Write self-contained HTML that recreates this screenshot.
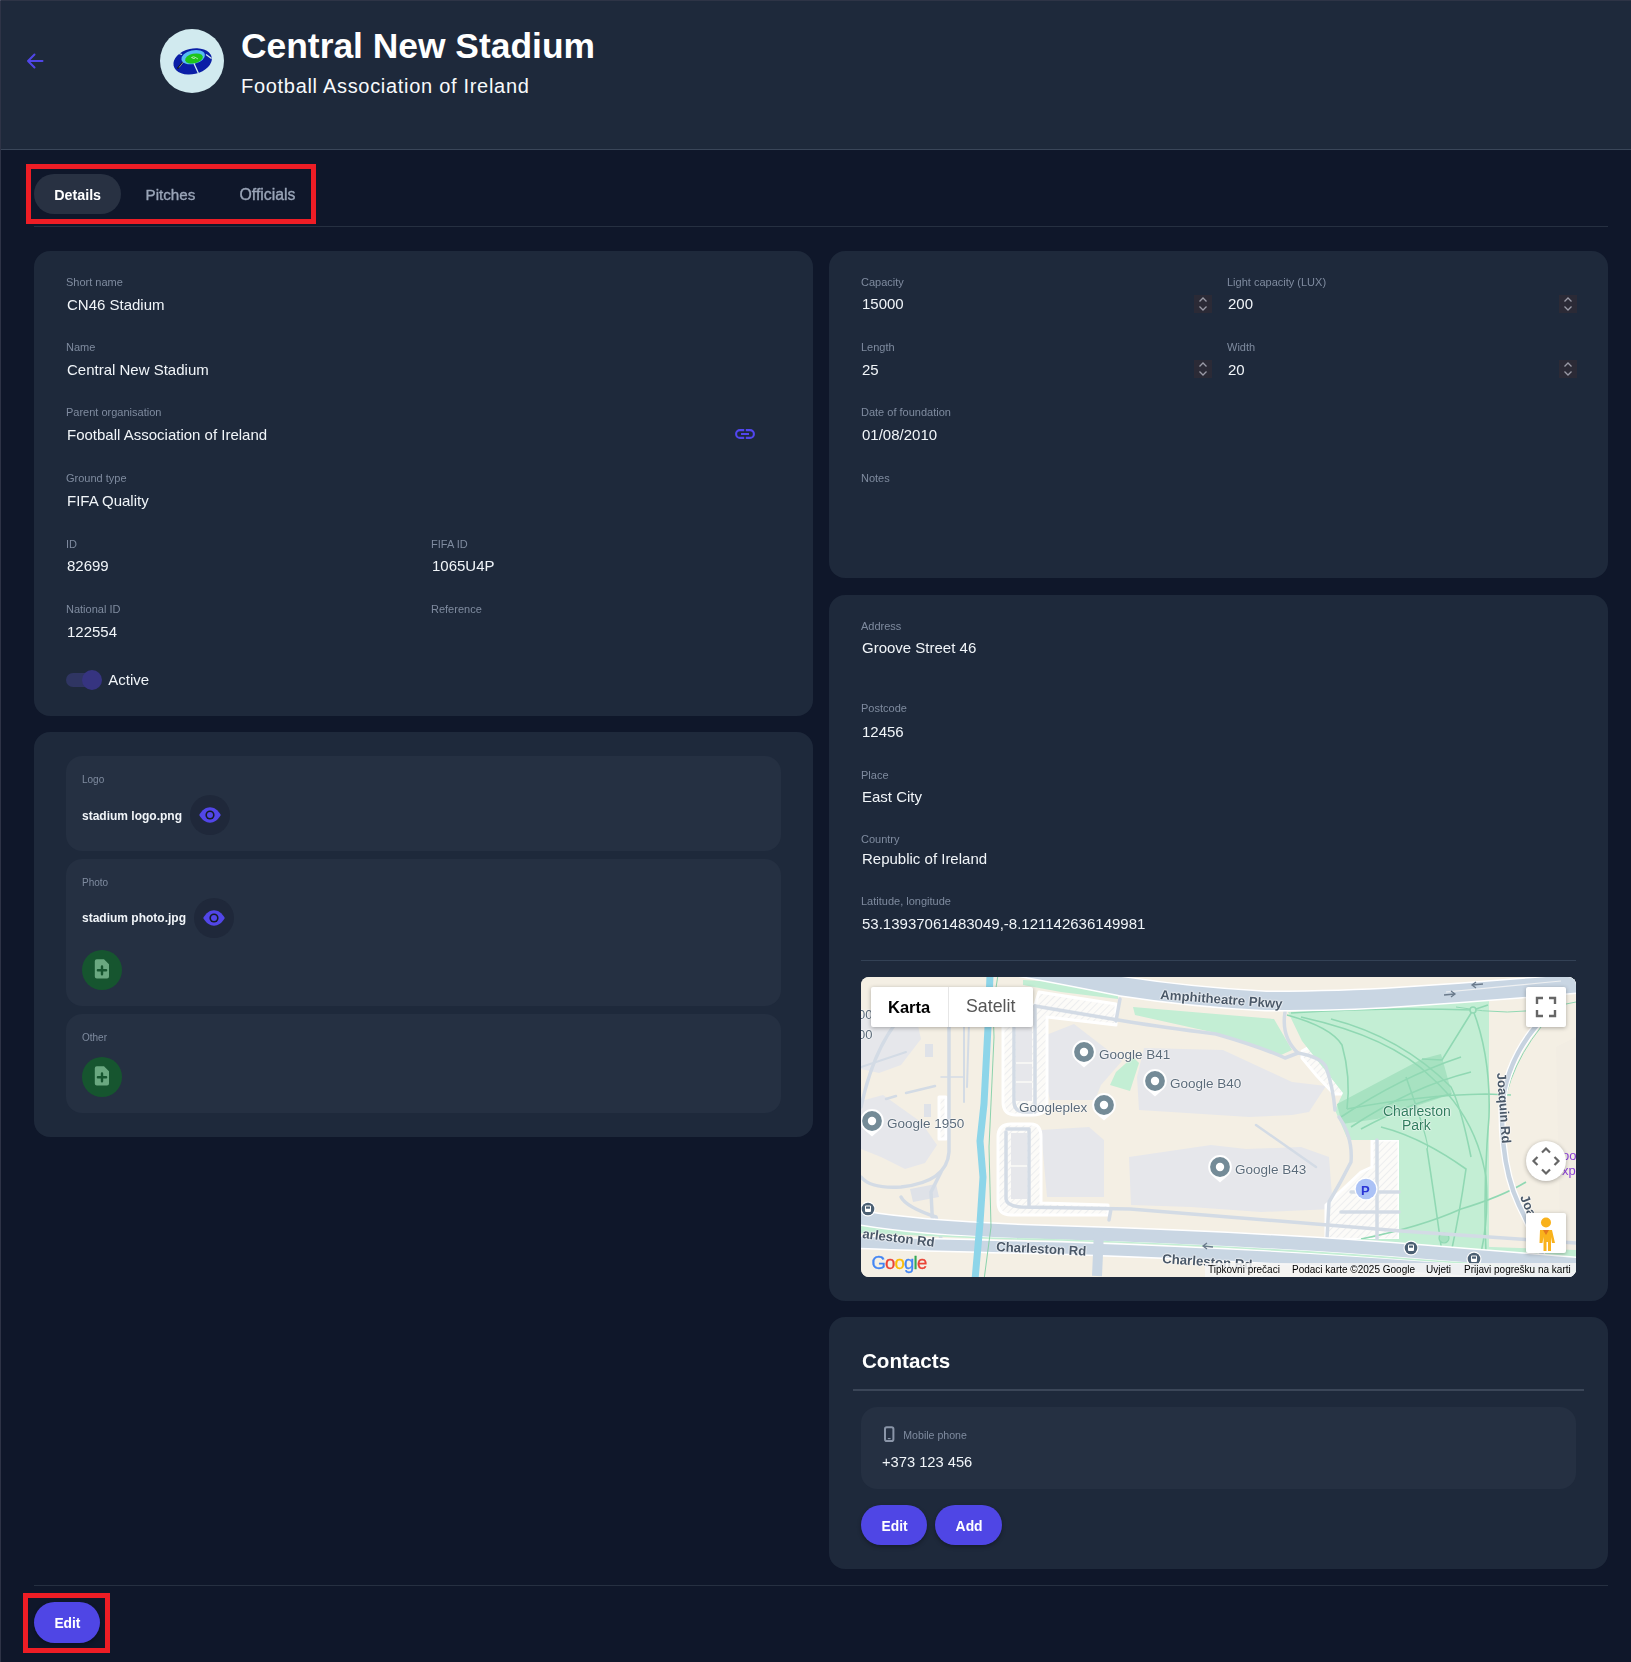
<!DOCTYPE html>
<html><head><meta charset="utf-8"><title>Central New Stadium</title>
<style>
html,body{margin:0;padding:0;}
body{width:1631px;height:1662px;position:relative;overflow:hidden;background:#0f172a;font-family:"Liberation Sans",sans-serif;}
.t{position:absolute;white-space:nowrap;line-height:1;}
.r{position:absolute;}
</style></head><body>
<div class="r" style="left:0px;top:0px;width:1631px;height:149px;background:#1e293b;border-radius:0px;"></div>
<div class="r" style="left:0px;top:149px;width:1631px;height:1px;background:#3a4659;border-radius:0px;"></div>
<div class="r" style="left:0px;top:0px;width:1631px;height:1px;background:#2e3446;border-radius:0px;"></div>
<div class="r" style="left:0px;top:0px;width:1px;height:1662px;background:#2e3346;border-radius:0px;"></div>
<div class="r" style="left:0px;top:0px;width:1px;height:1px;background:#4a5264;border-radius:0px;"></div>
<svg class="r" style="left:24px;top:50px" width="22" height="22" viewBox="0 0 22 22"><path d="M18.5 11H4 M10.5 4.5L4 11l6.5 6.5" fill="none" stroke="#5046e8" stroke-width="2" stroke-linecap="round" stroke-linejoin="round"/></svg>
<div class="r" style="left:160px;top:29px;width:64px;height:64px;border-radius:50%;background:#d1eaef"></div>
<svg class="r" style="left:165px;top:40px" width="55" height="42" viewBox="0 0 55 42">
<g transform="rotate(-13 27 21)">
<ellipse cx="27.5" cy="21.5" rx="19.5" ry="12.8" fill="#0a1ea6"/>
<ellipse cx="29" cy="17.5" rx="12" ry="6.8" fill="#55baf5"/>
<ellipse cx="29.5" cy="19" rx="9" ry="4.8" fill="#1ec51a"/>
</g>
<path d="M29 23.5 L33.5 33.5" stroke="#d1eaef" stroke-width="1.3"/>
<path d="M17 14.5 L12 13" stroke="#d1eaef" stroke-width="1.3"/>
<path d="M41 14.5 L46.5 18.5" stroke="#d1eaef" stroke-width="1.2"/>
<path d="M12.5 28.5 L17.8 22.5" stroke="#111" stroke-width="1.4"/>
<path d="M14 27.5 L18.5 22" stroke="#d1eaef" stroke-width="0.6"/>
<path d="M26.5 17.5 q2 -1.5 4 0 q-1 2.5 -4 0z M30.5 17.5 L33 19" stroke="#d8f5d8" stroke-width="0.7" fill="none"/>
</svg>
<div class="t" style="left:241px;top:28.53px;font-size:35.4px;color:#ffffff;font-weight:700;">Central New Stadium</div>
<div class="t" style="left:241px;top:75.77px;font-size:20px;color:#f8fafc;letter-spacing:0.7px;">Football Association of Ireland</div>
<div class="r" style="left:0;top:0;width:1631px;height:1662px;will-change:transform">
<div class="r" style="left:34px;top:174px;width:87px;height:40px;background:#283142;border-radius:20px;"></div>
<div class="t" style="left:54.2px;top:188.20px;font-size:14.3px;color:#ffffff;font-weight:700;">Details</div>
<div class="t" style="left:145.5px;top:187.43px;font-size:15.2px;color:#9aa5b8;-webkit-text-stroke:0.35px #9aa5b8;">Pitches</div>
<div class="t" style="left:239.5px;top:186.93px;font-size:15.8px;color:#9aa5b8;-webkit-text-stroke:0.35px #9aa5b8;">Officials</div>
<div class="r" style="left:34px;top:226px;width:1574px;height:1px;background:#263041;border-radius:0px;"></div>
<div class="r" style="left:26px;top:164px;width:290px;height:60px;box-sizing:border-box;border:5px solid #ee1d25"></div>
<div class="r" style="left:34px;top:251px;width:779px;height:465px;background:#1e293b;border-radius:16px;"></div>
<div class="t" style="left:66px;top:276.69px;font-size:11px;color:#7f8b9f;">Short name</div>
<div class="t" style="left:67px;top:296.80px;font-size:15px;color:#f1f5f9;">CN46 Stadium</div>
<div class="t" style="left:66px;top:341.99px;font-size:11px;color:#7f8b9f;">Name</div>
<div class="t" style="left:67px;top:362.10px;font-size:15px;color:#f1f5f9;">Central New Stadium</div>
<div class="t" style="left:66px;top:407.49px;font-size:11px;color:#7f8b9f;">Parent organisation</div>
<div class="t" style="left:67px;top:427.10px;font-size:15px;color:#f1f5f9;">Football Association of Ireland</div>
<div class="t" style="left:66px;top:472.69px;font-size:11px;color:#7f8b9f;">Ground type</div>
<div class="t" style="left:67px;top:493.10px;font-size:15px;color:#f1f5f9;">FIFA Quality</div>
<div class="t" style="left:66px;top:539.29px;font-size:11px;color:#7f8b9f;">ID</div>
<div class="t" style="left:67px;top:558.30px;font-size:15px;color:#f1f5f9;">82699</div>
<div class="t" style="left:431px;top:539.29px;font-size:11px;color:#7f8b9f;">FIFA ID</div>
<div class="t" style="left:432px;top:558.30px;font-size:15px;color:#f1f5f9;">1065U4P</div>
<div class="t" style="left:66px;top:603.99px;font-size:11px;color:#7f8b9f;">National ID</div>
<div class="t" style="left:67px;top:623.90px;font-size:15px;color:#f1f5f9;">122554</div>
<div class="t" style="left:431px;top:603.99px;font-size:11px;color:#7f8b9f;">Reference</div>
<svg class="r" style="left:733px;top:426px" width="24" height="16" viewBox="0 0 24 16"><path d="M11.2 4.1H7a3.9 3.9 0 0 0 0 7.8h4.2 M12.8 4.1H17a3.9 3.9 0 0 1 0 7.8h-4.2 M8 8h8" fill="none" stroke="#5246f0" stroke-width="2.1"/></svg>
<div class="r" style="left:66px;top:673px;width:34px;height:14px;background:#2f3562;border-radius:7px;"></div>
<div class="r" style="left:82px;top:670px;width:20px;height:20px;border-radius:50%;background:#363480"></div>
<div class="t" style="left:108.3px;top:672.40px;font-size:15px;color:#f1f5f9;">Active</div>
<div class="r" style="left:34px;top:732px;width:779px;height:405px;background:#1e293b;border-radius:16px;"></div>
<div class="r" style="left:66px;top:756px;width:715px;height:95px;background:#253042;border-radius:16px;"></div>
<div class="t" style="left:82px;top:774.53px;font-size:10px;color:#7f8b9f;">Logo</div>
<div class="t" style="left:82px;top:809.54px;font-size:12px;color:#f1f5f9;font-weight:700;">stadium logo.png</div>
<div class="r" style="left:82px;top:959px;width:0px;height:0px;background:none;border-radius:0px;"></div>
<div class="r" style="left:190px;top:795px;width:40px;height:40px;border-radius:50%;background:#1f283a"></div>
<svg class="r" style="left:198px;top:807px" width="24" height="16" viewBox="0 0 24 16"><path d="M1.2 8C4 3 8 0.3 12 0.3s8 2.7 10.8 7.7c-2.8 5-6.8 7.7-10.8 7.7S4 13 1.2 8z" fill="#5246e8"/><circle cx="12" cy="8" r="4.6" fill="#141d24"/><circle cx="12" cy="8" r="3" fill="#5246e8"/></svg>
<div class="r" style="left:66px;top:859px;width:715px;height:147px;background:#253042;border-radius:16px;"></div>
<div class="t" style="left:82px;top:877.53px;font-size:10px;color:#7f8b9f;">Photo</div>
<div class="t" style="left:82px;top:912.34px;font-size:12px;color:#f1f5f9;font-weight:700;">stadium photo.jpg</div>
<div class="r" style="left:194px;top:898px;width:40px;height:40px;border-radius:50%;background:#1f283a"></div>
<svg class="r" style="left:202px;top:910px" width="24" height="16" viewBox="0 0 24 16"><path d="M1.2 8C4 3 8 0.3 12 0.3s8 2.7 10.8 7.7c-2.8 5-6.8 7.7-10.8 7.7S4 13 1.2 8z" fill="#5246e8"/><circle cx="12" cy="8" r="4.6" fill="#141d24"/><circle cx="12" cy="8" r="3" fill="#5246e8"/></svg>
<div class="r" style="left:82px;top:950px;width:40px;height:40px;border-radius:50%;background:#16552f"></div>
<svg class="r" style="left:94px;top:959px" width="16" height="22" viewBox="0 0 16 22"><path d="M0.8 2.2a2 2 0 0 1 2-2h7.2l5 5v12.2a2 2 0 0 1-2 2H2.8a2 2 0 0 1-2-2z" fill="#6aa880"/><path d="M8 7.5v7.8 M3.9 11.3h8.2" stroke="#16552f" stroke-width="2.4" stroke-linecap="round"/></svg>
<div class="r" style="left:66px;top:1014px;width:715px;height:99px;background:#253042;border-radius:16px;"></div>
<div class="t" style="left:82px;top:1032.84px;font-size:10px;color:#7f8b9f;">Other</div>
<div class="r" style="left:82px;top:1057px;width:40px;height:40px;border-radius:50%;background:#16552f"></div>
<svg class="r" style="left:94px;top:1066px" width="16" height="22" viewBox="0 0 16 22"><path d="M0.8 2.2a2 2 0 0 1 2-2h7.2l5 5v12.2a2 2 0 0 1-2 2H2.8a2 2 0 0 1-2-2z" fill="#6aa880"/><path d="M8 7.5v7.8 M3.9 11.3h8.2" stroke="#16552f" stroke-width="2.4" stroke-linecap="round"/></svg>
<div class="r" style="left:829px;top:251px;width:779px;height:327px;background:#1e293b;border-radius:16px;"></div>
<div class="t" style="left:861px;top:276.69px;font-size:11px;color:#7f8b9f;">Capacity</div>
<div class="t" style="left:862px;top:296.30px;font-size:15px;color:#f1f5f9;">15000</div>
<div class="t" style="left:1227px;top:276.69px;font-size:11px;color:#7f8b9f;">Light capacity (LUX)</div>
<div class="t" style="left:1228px;top:296.30px;font-size:15px;color:#f1f5f9;">200</div>
<div class="t" style="left:861px;top:341.99px;font-size:11px;color:#7f8b9f;">Length</div>
<div class="t" style="left:862px;top:362.10px;font-size:15px;color:#f1f5f9;">25</div>
<div class="t" style="left:1227px;top:341.99px;font-size:11px;color:#7f8b9f;">Width</div>
<div class="t" style="left:1228px;top:362.10px;font-size:15px;color:#f1f5f9;">20</div>
<div class="t" style="left:861px;top:407.49px;font-size:11px;color:#7f8b9f;">Date of foundation</div>
<div class="t" style="left:862px;top:426.80px;font-size:15px;color:#f1f5f9;">01/08/2010</div>
<div class="t" style="left:861px;top:472.69px;font-size:11px;color:#7f8b9f;">Notes</div>
<div class="r" style="left:1194px;top:295px;width:18px;height:18px;background:#2b2a36"></div>
<svg class="r" style="left:1194px;top:295px" width="18" height="18" viewBox="0 0 18 18"><path d="M5.5 6.5L9 3l3.5 3.5 M5.5 11.5L9 15l3.5-3.5" fill="none" stroke="#9a9aa6" stroke-width="1.3"/></svg>
<div class="r" style="left:1559px;top:295px;width:18px;height:18px;background:#2b2a36"></div>
<svg class="r" style="left:1559px;top:295px" width="18" height="18" viewBox="0 0 18 18"><path d="M5.5 6.5L9 3l3.5 3.5 M5.5 11.5L9 15l3.5-3.5" fill="none" stroke="#9a9aa6" stroke-width="1.3"/></svg>
<div class="r" style="left:1194px;top:360px;width:18px;height:18px;background:#2b2a36"></div>
<svg class="r" style="left:1194px;top:360px" width="18" height="18" viewBox="0 0 18 18"><path d="M5.5 6.5L9 3l3.5 3.5 M5.5 11.5L9 15l3.5-3.5" fill="none" stroke="#9a9aa6" stroke-width="1.3"/></svg>
<div class="r" style="left:1559px;top:360px;width:18px;height:18px;background:#2b2a36"></div>
<svg class="r" style="left:1559px;top:360px" width="18" height="18" viewBox="0 0 18 18"><path d="M5.5 6.5L9 3l3.5 3.5 M5.5 11.5L9 15l3.5-3.5" fill="none" stroke="#9a9aa6" stroke-width="1.3"/></svg>
<div class="r" style="left:829px;top:595px;width:779px;height:706px;background:#1e293b;border-radius:16px;"></div>
<div class="t" style="left:861px;top:620.69px;font-size:11px;color:#7f8b9f;">Address</div>
<div class="t" style="left:862px;top:640.30px;font-size:15px;color:#f1f5f9;">Groove Street 46</div>
<div class="t" style="left:861px;top:703.49px;font-size:11px;color:#7f8b9f;">Postcode</div>
<div class="t" style="left:862px;top:724.30px;font-size:15px;color:#f1f5f9;">12456</div>
<div class="t" style="left:861px;top:769.69px;font-size:11px;color:#7f8b9f;">Place</div>
<div class="t" style="left:862px;top:789.00px;font-size:15px;color:#f1f5f9;">East City</div>
<div class="t" style="left:861px;top:834.29px;font-size:11px;color:#7f8b9f;">Country</div>
<div class="t" style="left:862px;top:851.30px;font-size:15px;color:#f1f5f9;">Republic of Ireland</div>
<div class="t" style="left:861px;top:896.39px;font-size:11px;color:#7f8b9f;">Latitude, longitude</div>
<div class="t" style="left:862px;top:916.30px;font-size:15px;color:#f1f5f9;">53.13937061483049,-8.121142636149981</div>
<div class="r" style="left:861px;top:960px;width:715px;height:1px;background:#334155;border-radius:0px;"></div>
<div class="r" style="left:861px;top:977px;width:715px;height:300px;border-radius:8px;overflow:hidden;background:#f4efe4"><svg class="r" style="left:0;top:0" width="715" height="300" viewBox="0 0 715 300"><defs><pattern id="hatch" width="5" height="5" patternUnits="userSpaceOnUse" patternTransform="rotate(45)"><rect width="5" height="5" fill="#fcfbf8"/><line x1="0" y1="0" x2="0" y2="5" stroke="#dfe1e6" stroke-width="1"/></pattern></defs><rect x="0" y="0" width="715" height="300" fill="#f4efe4"/><path d="M695 70 L715 60 L715 299 L700 299 Z" fill="#f2ede3"/><path d="M0 38 L30 28 L55 40 L60 62 L40 88 L18 96 L0 92 Z" fill="#e6e7eb"/><path d="M0 124 L22 118 L60 145 L76 168 L64 186 L44 192 L20 180 L0 172 Z" fill="#e6e7eb"/><path d="M180 60 L213 47 L261 84 L240 108 L234 123 L189 123 L180 86 Z" fill="#e6e7eb"/><path d="M283 71 L362 73 L431 105 L465 109 L448 135 L431 138 L388 140 L310 135 L278 133 L276 100 Z" fill="#e6e7eb"/><path d="M180 153 L228 150 L243 163 L243 220 L186 220 Z" fill="#e6e7eb"/><path d="M268 180 L350 168 L385 172 L440 170 L468 180 L472 232 L400 235 L330 230 L270 228 Z" fill="#e6e7eb"/><path d="M64 67 L72 67 L72 80 L64 80 Z M63 127 L70 127 L70 140 L63 140 Z M49 212 L75 207 L78 220 L52 225 Z" fill="#dfe2e8"/><g fill="url(#hatch)" stroke="#ffffff" stroke-width="3" stroke-linejoin="round"><path d="M142 28 L174 28 L178 15 L255 27 L255 48 L186 40 L186 125 Q186 138 172 138 L155 138 Q142 138 142 125 Z"/><path d="M137 160 Q137 147 150 147 L170 147 Q180 147 180 160 L180 226 L247 228 L247 238 L150 238 Q137 238 137 225 Z"/><path d="M441 74 L456 66 L482 105 L482 117 L473 117 L456 99 L441 81 Z"/><path d="M511 163 L538 163 L538 263 L465 262 L465 228 L500 195 L511 190 Z"/><rect x="78" y="120" width="7" height="42"/></g><rect x="155" y="48" width="16" height="76" fill="#e6e7eb"/><rect x="150" y="156" width="16" height="66" fill="#e6e7eb"/><path d="M155 86 L171 86 M155 105 L171 105 M150 189 L166 189" stroke="#fcfbf8" stroke-width="1.5"/><path d="M427 35 L628 21 L628 270 L476 270 L476 262 L538 262 L538 163 L510 163 L487 163 L474 133 L482 116 L441 64 Z" fill="#c3eed4"/><path d="M272 30 L413 42 L431 73 L420 78 L355 56 L274 38 Z" fill="#c3eed4"/><path d="M162 3 L257 8 L257 22 L200 15 L162 8 Z" fill="#c3eed4"/><path d="M249 108 L255 95 L272 80 L278 86 L269 114 Z" fill="#c3eed4"/><path d="M-5 236 L60 244 L200 250 L360 258 L520 266 L715 273 L715 280 L-5 256 Z" fill="#c3eed4"/><path d="M476 127 L561 82 L580 77 L591 117 L516 142 L481 147 Z" fill="#a7e2c1"/><g fill="none" stroke="#90d8b3" stroke-width="1.6"><path d="M426 38 Q470 50 481 68 Q490 100 486 132"/><path d="M440 40 Q530 60 570 100 Q615 140 625 200 Q628 240 620 276"/><path d="M470 42 Q540 60 590 110 Q600 130 610 180"/><path d="M430 36 Q520 30 612 33 L627 28"/><path d="M612 33 L581 83 L561 82"/><path d="M612 33 Q630 80 628 140 Q622 210 625 276"/><path d="M486 132 Q560 118 625 117 L650 118"/><path d="M480 140 Q540 100 600 80"/><path d="M490 150 Q550 110 610 95"/><path d="M500 152 Q550 125 590 117"/><path d="M545 100 Q570 170 566 172 Q575 230 581 276"/><path d="M520 150 Q560 160 605 192 Q598 240 590 276"/><path d="M500 262 Q560 250 600 232 Q640 220 665 205"/><path d="M595 30 Q650 40 690 30 L715 25" stroke-width="1"/><path d="M680 50 Q640 100 640 160 Q650 230 690 299" stroke-width="1"/></g><circle cx="583" cy="261" r="5" fill="#a7e2c1" stroke="#90d8b3" stroke-width="1.2"/><circle cx="612" cy="33" r="3" fill="#c3eed4" stroke="#90d8b3" stroke-width="1.6"/><path d="M565 140 L565 150 M570 140 L570 150 M575 140 L575 150" stroke="#c3eed4" stroke-width="1.5" stroke-dasharray="1.5 2"/><g fill="none" stroke="#d3dbe5" stroke-width="3.5" stroke-linecap="round" stroke-linejoin="round"><path d="M88 40 L88 175 Q86 205 40 210 Q10 212 0 200"/><path d="M0 130 Q15 60 50 30 Q80 5 120 15"/><path d="M40 220 Q45 230 75 240 L80 262"/><path d="M80 195 L70 215 L72 255"/><path d="M108 45 L106 110" stroke-width="2"/><path d="M153 48 L153 125 Q153 135 165 135 L171 135"/><path d="M174 29 L174 135"/><path d="M174 29 L269 45 Q300 50 355 57 Q400 70 424 81 L437 76 Q420 60 424 35"/><path d="M437 76 Q460 80 465 90 Q472 110 474 133"/><path d="M145 155 L145 222 Q146 229 160 230 L269 232 L540 254 L715 266"/><path d="M146 152 L168 152 L168 230"/><path d="M478 140 Q492 160 490 185 Q480 205 468 225 L466 262"/><path d="M395 148 L455 190" stroke-width="2.5"/><path d="M250 232 L248 243"/><path d="M490 215 L520 215 L538 215"/><path d="M480 235 L538 235"/><path d="M516 163 L516 262"/><path d="M259 22 L255 44"/><path d="M0 90 L45 75" stroke-width="2"/><path d="M45 116 L74 109" stroke-width="2.5"/><path d="M25 122 L35 119" stroke-width="2.5"/><path d="M103 50 L103 125" stroke-width="2"/><path d="M80 100 L103 100" stroke-width="1.5"/></g><path d="M676 48 Q645 85 641 130 Q640 190 658 228 Q675 262 692 305" fill="none" stroke="#ffffff" stroke-width="7"/><path d="M676 48 Q645 85 641 130 Q640 190 658 228 Q675 262 692 305" fill="none" stroke="#c7d3e0" stroke-width="4.5"/><path d="M150 -12 Q215 0 259 9 Q330 20 405 24 Q480 24 539 20 Q630 14 720 6" fill="none" stroke="#ffffff" stroke-width="21"/><path d="M150 -12 Q215 0 259 9 Q330 20 405 24 Q480 24 539 20 Q630 14 720 6" fill="none" stroke="#c9d6e3" stroke-width="18"/><path d="M585 15 Q640 10 700 4" fill="none" stroke="#eef0f2" stroke-width="1.2"/><path d="M-5 240 Q60 252 200 256 Q400 262 560 275 Q650 282 720 288" fill="none" stroke="#ffffff" stroke-width="16"/><path d="M-5 240 Q60 252 200 256 Q400 262 560 275 Q650 282 720 288" fill="none" stroke="#c9d6e3" stroke-width="13"/><path d="M-5 265 Q60 268 200 271 Q400 278 560 290 Q650 296 720 302" fill="none" stroke="#ffffff" stroke-width="14"/><path d="M-5 265 Q60 268 200 271 Q400 278 560 290 Q650 296 720 302" fill="none" stroke="#c9d6e3" stroke-width="11"/><path d="M-5 253 Q60 260 200 263 Q400 270 560 283 Q650 289 720 295" fill="none" stroke="#c3eed4" stroke-width="1.6"/><path d="M238 254 L236 299" stroke="#c9d6e3" stroke-width="10"/><path d="M352 270 L342 269 M346 266 L342 269 L346 272" stroke="#6b7b8c" stroke-width="1.3" fill="none"/><path d="M583 18 L594 17 M590 14 L594 17 L590 20" stroke="#6b7b8c" stroke-width="1.3" fill="none"/><path d="M622 7 L611 8 M615 5 L611 8 L615 11" stroke="#6b7b8c" stroke-width="1.3" fill="none"/><path d="M129 -2 L127 50 L123 127 L119 164 L122 200 L119 246 L114 303" fill="none" stroke="#8dd5e9" stroke-width="7"/><path d="M137 -2 Q131 30 133 60 L128 170 L130 250 L123 303" fill="none" stroke="#7fcfa6" stroke-width="0.9"/><g><path d="M214.4 83 A11.8 11.8 0 1 1 231.6 83 L223 90.5 Z" fill="#ffffff"/><circle cx="223" cy="75" r="9.9" fill="#748b97"/><circle cx="223" cy="75" r="4.2" fill="#ffffff"/></g><g><path d="M285.4 112 A11.8 11.8 0 1 1 302.6 112 L294 119.5 Z" fill="#ffffff"/><circle cx="294" cy="104" r="9.9" fill="#748b97"/><circle cx="294" cy="104" r="4.2" fill="#ffffff"/></g><g><path d="M234.4 136 A11.8 11.8 0 1 1 251.6 136 L243 143.5 Z" fill="#ffffff"/><circle cx="243" cy="128" r="9.9" fill="#748b97"/><circle cx="243" cy="128" r="4.2" fill="#ffffff"/></g><g><path d="M2.4000000000000004 152 A11.8 11.8 0 1 1 19.6 152 L11 159.5 Z" fill="#ffffff"/><circle cx="11" cy="144" r="9.9" fill="#748b97"/><circle cx="11" cy="144" r="4.2" fill="#ffffff"/></g><g><path d="M350.4 198 A11.8 11.8 0 1 1 367.6 198 L359 205.5 Z" fill="#ffffff"/><circle cx="359" cy="190" r="9.9" fill="#748b97"/><circle cx="359" cy="190" r="4.2" fill="#ffffff"/></g><circle cx="7" cy="232" r="7.5" fill="#ffffff"/><circle cx="7" cy="232" r="6.3" fill="#4b5f72"/><rect x="4" y="228.5" width="6" height="6.5" rx="1" fill="#ffffff"/><rect x="5" y="229.5" width="4" height="2.2" fill="#4b5f72"/><circle cx="550" cy="271" r="7.5" fill="#ffffff"/><circle cx="550" cy="271" r="6.3" fill="#4b5f72"/><rect x="547" y="267.5" width="6" height="6.5" rx="1" fill="#ffffff"/><rect x="548" y="268.5" width="4" height="2.2" fill="#4b5f72"/><circle cx="613" cy="282" r="7.5" fill="#ffffff"/><circle cx="613" cy="282" r="6.3" fill="#4b5f72"/><rect x="610" y="278.5" width="6" height="6.5" rx="1" fill="#ffffff"/><rect x="611" y="279.5" width="4" height="2.2" fill="#4b5f72"/><circle cx="505" cy="212" r="11.5" fill="#ffffff"/><circle cx="505" cy="212" r="10.3" fill="#abc2f6"/></svg><div class="t" style="left:238px;top:70.6px;font-size:13.5px;color:#5b6b7a;text-shadow:0 0 2px #fff,0 0 2px #fff,0 0 1px #fff;">Google B41</div><div class="t" style="left:309px;top:99.6px;font-size:13.5px;color:#5b6b7a;text-shadow:0 0 2px #fff,0 0 2px #fff,0 0 1px #fff;">Google B40</div><div class="t" style="left:158px;top:123.6px;font-size:13.5px;color:#5b6b7a;text-shadow:0 0 2px #fff,0 0 2px #fff,0 0 1px #fff;">Googleplex</div><div class="t" style="left:26px;top:139.6px;font-size:13.5px;color:#5b6b7a;text-shadow:0 0 2px #fff,0 0 2px #fff,0 0 1px #fff;">Google 1950</div><div class="t" style="left:374px;top:185.6px;font-size:13.5px;color:#5b6b7a;text-shadow:0 0 2px #fff,0 0 2px #fff,0 0 1px #fff;">Google B43</div><div class="t" style="left:522px;top:127.1px;font-size:14px;color:#2f7d5d;text-shadow:0 0 2px #fff,0 0 2px #fff,0 0 1px #fff;">Charleston</div><div class="t" style="left:541px;top:141.1px;font-size:14px;color:#2f7d5d;text-shadow:0 0 2px #fff,0 0 2px #fff,0 0 1px #fff;">Park</div><div class="t" style="left:299px;top:10.8px;font-size:13.2px;color:#4a5868;font-weight:700;transform:rotate(4.4deg);transform-origin:0 85%;text-shadow:0 0 2px #fff,0 0 2px #fff,0 0 1px #fff;">Amphitheatre Pkwy</div><div class="t" style="left:1px;top:249.8px;font-size:13.2px;color:#4a5868;font-weight:700;transform:rotate(7deg);transform-origin:0 85%;text-shadow:0 0 2px #fff,0 0 2px #fff,0 0 1px #fff;">arleston Rd</div><div class="t" style="left:135px;top:262.8px;font-size:13.2px;color:#4a5868;font-weight:700;transform:rotate(3deg);transform-origin:0 85%;text-shadow:0 0 2px #fff,0 0 2px #fff,0 0 1px #fff;">Charleston Rd</div><div class="t" style="left:301px;top:274.8px;font-size:13.2px;color:#4a5868;font-weight:700;transform:rotate(4deg);transform-origin:0 85%;text-shadow:0 0 2px #fff,0 0 2px #fff,0 0 1px #fff;">Charleston Rd</div><div class="t" style="left:636px;top:85.0px;font-size:13px;color:#4a5868;font-weight:700;transform:rotate(86deg);transform-origin:0 85%;text-shadow:0 0 2px #fff,0 0 2px #fff,0 0 1px #fff;">Joaquin Rd</div><div class="t" style="left:659px;top:209.0px;font-size:13px;color:#4a5868;font-weight:700;transform:rotate(68deg);transform-origin:0 85%;text-shadow:0 0 2px #fff,0 0 2px #fff,0 0 1px #fff;">Joa..</div><div class="t" style="left:-3px;top:31.0px;font-size:13px;color:#5b6b7a;text-shadow:0 0 2px #fff,0 0 2px #fff,0 0 1px #fff;">00</div><div class="t" style="left:-3px;top:51.0px;font-size:13px;color:#5b6b7a;text-shadow:0 0 2px #fff,0 0 2px #fff,0 0 1px #fff;">00</div><div class="t" style="left:500px;top:207.0px;font-size:13px;color:#2a35d6;font-weight:700;">P</div><div class="t" style="left:701px;top:172.0px;font-size:13px;color:#8b3fd8;">oo</div><div class="t" style="left:701px;top:187.0px;font-size:13px;color:#8b3fd8;">xp</div><div class="r" style="left:10px;top:10px;width:162px;height:40px;background:#fff;border-radius:2px;box-shadow:0 1px 4px rgba(0,0,0,.3)"></div><div class="r" style="left:87px;top:10px;width:1px;height:40px;background:#e6e6e6"></div><div class="r" style="left:665px;top:10px;width:40px;height:40px;background:#fff;border-radius:2px;box-shadow:0 1px 4px rgba(0,0,0,.3)"></div><svg class="r" style="left:665px;top:10px" width="40" height="40" viewBox="0 0 40 40"><path d="M11 17V11h6 M23 11h6v6 M29 23v6h-6 M17 29h-6v-6" fill="none" stroke="#666" stroke-width="2.4"/></svg><div class="r" style="left:665px;top:164px;width:40px;height:40px;background:#fff;border-radius:50%;box-shadow:0 1px 4px rgba(0,0,0,.3)"></div><svg class="r" style="left:665px;top:164px" width="40" height="40" viewBox="0 0 40 40"><path d="M16 11.5l4-4 4 4 M16 28.5l4 4 4-4 M11.5 16l-4 4 4 4 M28.5 16l4 4-4 4" fill="none" stroke="#666" stroke-width="2.2"/></svg><div class="r" style="left:665px;top:236px;width:40px;height:40px;background:#fff;border-radius:2px;box-shadow:0 1px 4px rgba(0,0,0,.3)"></div><svg class="r" style="left:665px;top:236px" width="40" height="40" viewBox="0 0 40 40"><circle cx="20" cy="9.5" r="5" fill="#f9b21c"/><path d="M14 17h12l3 13h-3l-1-6v14h-3v-9h-1.5v9h-3V24l-1 6h-3z" fill="#f9b21c"/><path d="M17 17l3 5 3-5z" fill="#e2791e"/></svg><div class="r" style="left:344px;top:286px;width:371px;height:14px;background:rgba(245,245,245,.85)"></div><div class="t" style="left:10.5px;top:276.5px;font-size:18.5px;line-height:1;font-weight:400;letter-spacing:-0.8px;-webkit-text-stroke:0.3px currentColor"><span style="color:#4285f4">G</span><span style="color:#ea4335">o</span><span style="color:#fbbc05">o</span><span style="color:#4285f4">g</span><span style="color:#34a853">l</span><span style="color:#ea4335">e</span></div><div class="t" style="left:27px;top:22.0px;font-size:16.5px;color:#000000;font-weight:700;">Karta</div><div class="t" style="left:105px;top:20.9px;font-size:17.8px;color:#565656;">Satelit</div><div class="t" style="left:347px;top:287.5px;font-size:10px;color:#000000;">Tipkovni prečaci</div><div class="t" style="left:431px;top:287.5px;font-size:10px;color:#000000;">Podaci karte ©2025 Google</div><div class="t" style="left:565px;top:287.5px;font-size:10px;color:#000000;">Uvjeti</div><div class="t" style="left:603px;top:287.5px;font-size:10px;color:#000000;">Prijavi pogrešku na karti</div></div>
<div class="r" style="left:829px;top:1317px;width:779px;height:252px;background:#1e293b;border-radius:16px;"></div>
<div class="t" style="left:862px;top:1350.56px;font-size:20.6px;color:#ffffff;font-weight:700;">Contacts</div>
<div class="r" style="left:853px;top:1389px;width:731px;height:2px;background:#3b4658;border-radius:0px;"></div>
<div class="r" style="left:861px;top:1407px;width:715px;height:82px;background:#253042;border-radius:16px;"></div>
<svg class="r" style="left:883px;top:1426px" width="12" height="16" viewBox="0 0 12 16"><rect x="2" y="1.2" width="8.4" height="13.8" rx="1.8" fill="none" stroke="#8a95a8" stroke-width="2"/><path d="M4.8 12.6h2.8" stroke="#8a95a8" stroke-width="1.2"/></svg>
<div class="t" style="left:903.3px;top:1430.33px;font-size:10.6px;color:#7f8b9f;">Mobile phone</div>
<div class="t" style="left:882px;top:1455.26px;font-size:14.7px;color:#f1f5f9;">+373 123 456</div>
<div class="r" style="left:861px;top:1505px;width:66px;height:40px;background:#4f46e5;border-radius:20px;box-shadow:0 2px 4px rgba(0,0,0,.3);"></div>
<div class="t" style="left:881.5px;top:1519.82px;font-size:13.8px;color:#ffffff;font-weight:700;">Edit</div>
<div class="r" style="left:935px;top:1505px;width:67px;height:40px;background:#4f46e5;border-radius:20px;box-shadow:0 2px 4px rgba(0,0,0,.3);"></div>
<div class="t" style="left:955.6px;top:1519.73px;font-size:13.9px;color:#ffffff;font-weight:700;">Add</div>
<div class="r" style="left:34px;top:1585px;width:1574px;height:1px;background:#263041;border-radius:0px;"></div>
<div class="r" style="left:34px;top:1602px;width:66px;height:41px;background:#4f46e5;border-radius:20.5px;box-shadow:0 2px 4px rgba(0,0,0,.3);"></div>
<div class="t" style="left:54.4px;top:1617.12px;font-size:13.8px;color:#ffffff;font-weight:700;">Edit</div>
<div class="r" style="left:23px;top:1593px;width:87px;height:60px;box-sizing:border-box;border:5px solid #ee1d25"></div>
</div>
</body></html>
